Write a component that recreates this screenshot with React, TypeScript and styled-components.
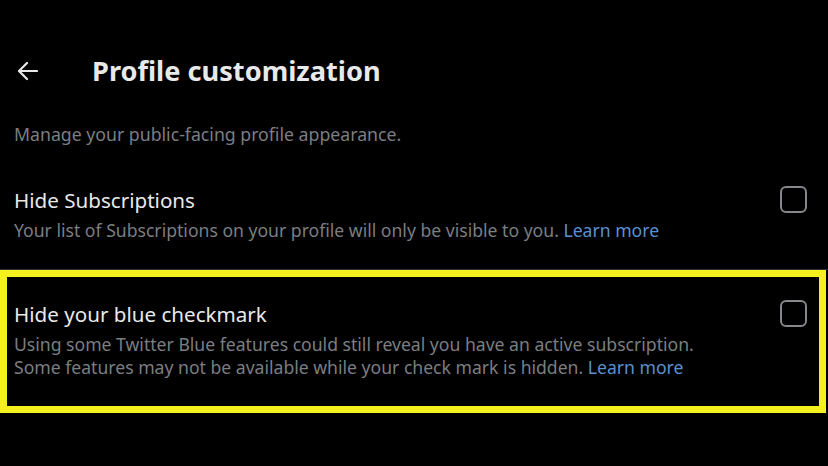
import React from "react";
import styled, { createGlobalStyle } from "styled-components";

const Global = createGlobalStyle`
  html, body { margin: 0; padding: 0; background: #000; }
  body { font-family: "Noto Sans", "Open Sans", sans-serif; -webkit-font-smoothing: antialiased; }
`;

const Page = styled.div`
  width: 828px;
  height: 466px;
  background: #000;
  overflow: hidden;
  display: flex;
  flex-direction: column;
`;

const Header = styled.header`
  display: flex;
  align-items: center;
  height: 54px;
  margin-top: 44px;
  padding-left: 17px;
  gap: 54px;
`;

const BackButton = styled.button`
  background: none;
  border: none;
  padding: 0;
  width: 21px;
  height: 20px;
  display: flex;
  color: #e7e9ea;
`;

const Title = styled.h1`
  margin: 0;
  font-size: 27.2px;
  font-weight: 700;
  color: #e7e9ea;
  line-height: 32px;
`;

const Description = styled.p`
  margin: 25px 0 0;
  padding: 0 14px;
  font-size: 17.7px;
  line-height: 22px;
  color: #7b7e82;
`;

const Row = styled.div<{ $highlight?: boolean }>`
  display: flex;
  align-items: flex-start;
  gap: 20px;
  ${({ $highlight }) =>
    $highlight
      ? `
    border: 7px solid #f5f11f;
    margin-right: 2px;
    padding: 24px 12px 27px 7px;
  `
      : `
    margin-top: 42px;
    padding: 0 21px 27px 14px;
    border-bottom: 1px solid #2f3336;
  `}
`;

const TextCol = styled.div`
  flex: 1;
  display: flex;
  flex-direction: column;
`;

const RowTitle = styled.div`
  font-size: 20.6px;
  line-height: 26px;
  color: #e7e9ea;
`;

const RowSub = styled.div<{ $tight?: boolean }>`
  margin-top: ${({ $tight }) => ($tight ? "6px" : "5px")};
  font-size: 17.6px;
  line-height: ${({ $tight }) => ($tight ? "23px" : "24px")};
  color: #7b7e82;
  white-space: nowrap;
`;

const Link = styled.a`
  color: #5a90d0;
  text-decoration: none;
`;

const Checkbox = styled.div`
  flex: none;
  width: 27px;
  height: 27px;
  box-sizing: border-box;
  border: 2px solid #85878a;
  border-radius: 6px;
  margin-top: -1px;
`;

export default function App() {
  return (
    <>
      <Global />
      <Page>
        <Header>
          <BackButton aria-label="Back">
            <svg width="21" height="20" viewBox="0 0 21 20" fill="none">
              <path
                d="M20 10H2.5M10 2L2 10l8 8"
                stroke="currentColor"
                strokeWidth="2.2"
                strokeLinecap="round"
                strokeLinejoin="round"
              />
            </svg>
          </BackButton>
          <Title>Profile customization</Title>
        </Header>
        <Description>Manage your public-facing profile appearance.</Description>
        <Row>
          <TextCol>
            <RowTitle>Hide Subscriptions</RowTitle>
            <RowSub>
              Your list of Subscriptions on your profile will only be visible to you.{" "}
              <Link>Learn more</Link>
            </RowSub>
          </TextCol>
          <Checkbox />
        </Row>
        <Row $highlight>
          <TextCol>
            <RowTitle>Hide your blue checkmark</RowTitle>
            <RowSub $tight>
              Using some Twitter Blue features could still reveal you have an active subscription.
              <br />
              Some features may not be available while your check mark is hidden.{" "}
              <Link>Learn more</Link>
            </RowSub>
          </TextCol>
          <Checkbox />
        </Row>
      </Page>
    </>
  );
}
